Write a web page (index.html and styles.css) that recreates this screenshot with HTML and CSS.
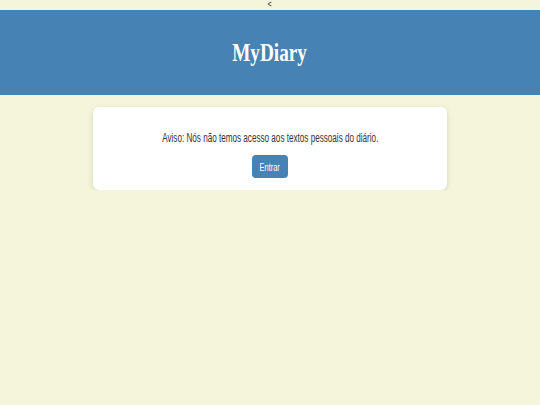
FILE: index.html
```html
<!DOCTYPE html>
<html lang="pt">
<head>
<meta charset="utf-8">
<title>MyDiary</title>
<link rel="stylesheet" href="styles.css">
</head>
<body>
<div class="topbar"><span class="squeeze">&lt;</span></div>
<header class="header">
  <h1 class="title"><span class="squeeze">MyDiary</span></h1>
</header>
<main class="main">
  <section class="card">
    <p class="notice"><span class="squeeze narrow">Aviso: Nós não temos acesso aos textos pessoais do diário.</span></p>
    <button class="btn"><span class="squeeze narrow">Entrar</span></button>
  </section>
</main>
</body>
</html>
```
FILE: styles.css
```css
html, body {
  margin: 0;
  padding: 0;
  background: #f5f5dc;
  font-family: "Liberation Sans", Arial, sans-serif;
}
.squeeze {
  display: inline-block;
  white-space: nowrap;
  transform: scaleX(0.74);
  transform-origin: center;
}
.squeeze.narrow {
  transform: scaleX(0.65);
}
.topbar {
  height: 10px;
  line-height: 9px;
  text-align: center;
  font-size: 9px;
  color: #555;
  font-weight: bold;
}
.header {
  background: #4682b4;
  height: 85px;
  display: flex;
  align-items: center;
  justify-content: center;
}
.title {
  margin: 0;
  color: #fff;
  font-family: "Liberation Serif", "Times New Roman", serif;
  font-weight: bold;
  font-size: 26px;
  line-height: 30px;
  white-space: nowrap;
}
.main {
  display: flex;
  justify-content: center;
  padding-top: 12px;
}
.card {
  width: 354px;
  box-sizing: border-box;
  background: #fff;
  border-radius: 6px;
  box-shadow: 0 2px 6px rgba(0,0,0,0.12);
  padding: 24px 20px 12px;
  display: flex;
  flex-direction: column;
  align-items: center;
}
.notice {
  margin: 0 0 9px;
  font-size: 12.5px;
  line-height: 15px;
  color: #333;
  white-space: nowrap;
}
.btn {
  background: #4682b4;
  color: #fff;
  border: none;
  border-radius: 4px;
  font-family: inherit;
  font-size: 11.5px;
  width: 36px;
  height: 23px;
  padding: 0;
  display: flex;
  align-items: center;
  justify-content: center;
}
```
